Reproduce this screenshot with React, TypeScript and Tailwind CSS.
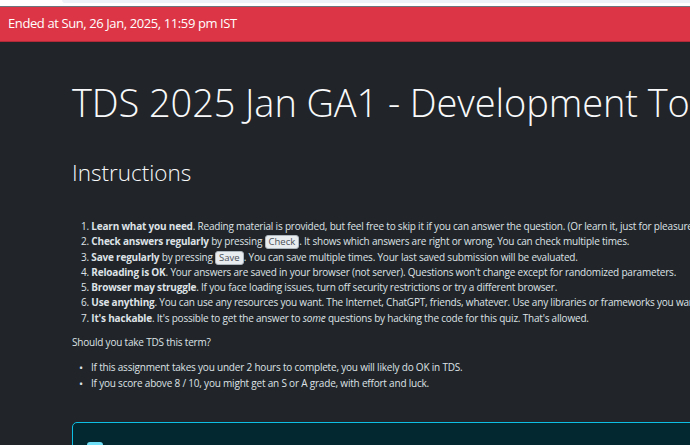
import React from "react";

const Kbd = ({ children }: { children: React.ReactNode }) => (
  <span className="inline-block rounded-[3px] border border-[#adb5bd] bg-[#e9ecef] px-[3px] text-[#495057] leading-[12px] text-[9.5px] tracking-normal align-[0px]">
    {children}
  </span>
);

export default function App() {
  const font = { fontFamily: '"Open Sans", "Noto Sans", sans-serif' };
  return (
    <div className="w-[690px] h-[445px] overflow-hidden bg-[#212529] text-[#dee2e6]" style={font}>
      <div className="relative h-[6px] bg-white">
        <div className="absolute left-[62px] right-0 top-0 h-[3px] rounded-bl-[3px] bg-[#edf2f9]" />
      </div>
      <div className="h-px bg-[#6c757d]" />
      <div className="flex h-[35px] items-center bg-[#dc3545] px-[8px] text-[13px] tracking-[-0.4px] text-white border-b border-[#b02a37]">
        Ended at Sun, 26 Jan, 2025, 11:59 pm IST
      </div>
      <div className="pl-[72px] whitespace-nowrap">
        <h1 className="mt-[37px] text-[38px] leading-[46px] font-light text-[#f8f9fa] tracking-[-0.1px]">
          TDS 2025 Jan GA1 - Development Tools
        </h1>
        <h2 className="mt-[33px] text-[22.5px] leading-[30px] font-light text-[#f8f9fa]">Instructions</h2>
        <ol className="mt-[31px] pl-[9px] text-[10px] leading-[15.3px] tracking-[-0.2px] list-decimal list-inside">
          <li>
            <b>Learn what you need</b>. Reading material is provided, but feel free to skip it if you can answer the
            question. (Or learn it, just for pleasure.)
          </li>
          <li>
            <b>Check answers regularly</b> by pressing <Kbd>Check</Kbd>. It shows which answers are right or wrong. You
            can check multiple times.
          </li>
          <li>
            <b>Save regularly</b> by pressing <Kbd>Save</Kbd>. You can save multiple times. Your last saved submission will
            be evaluated.
          </li>
          <li>
            <b>Reloading is OK</b>. Your answers are saved in your browser (not server). Questions won't change except for
            randomized parameters.
          </li>
          <li>
            <b>Browser may struggle</b>. If you face loading issues, turn off security restrictions or try a different
            browser.
          </li>
          <li>
            <b>Use anything</b>. You can use any resources you want. The Internet, ChatGPT, friends, whatever. Use any
            libraries or frameworks you want.
          </li>
          <li>
            <b>It's hackable</b>. It's possible to get the answer to <i>some</i> questions by hacking the code for this
            quiz. That's allowed.
          </li>
        </ol>
        <p className="mt-[9px] text-[10px] leading-[15.3px] tracking-[-0.2px]">Should you take TDS this term?</p>
        <ul className="mt-[10px] text-[10px] leading-[15.3px] tracking-[-0.2px]">
          <li className="flex">
            <span className="w-[19px] pl-[7px] text-[11px]">•</span>
            <span>If this assignment takes you under 2 hours to complete, you will likely do OK in TDS.</span>
          </li>
          <li className="flex">
            <span className="w-[19px] pl-[7px] text-[11px]">•</span>
            <span>If you score above 8 / 10, you might get an S or A grade, with effort and luck.</span>
          </li>
        </ul>
        <div className="mt-[31px] h-[60px] w-[700px] rounded-[5px] border border-[#0dbfe3] bg-[#032830] pl-[14px] pt-[19px]">
          <div className="h-[16px] w-[16px] rounded-[3px] bg-[#6edff6]" />
        </div>
      </div>
    </div>
  );
}
